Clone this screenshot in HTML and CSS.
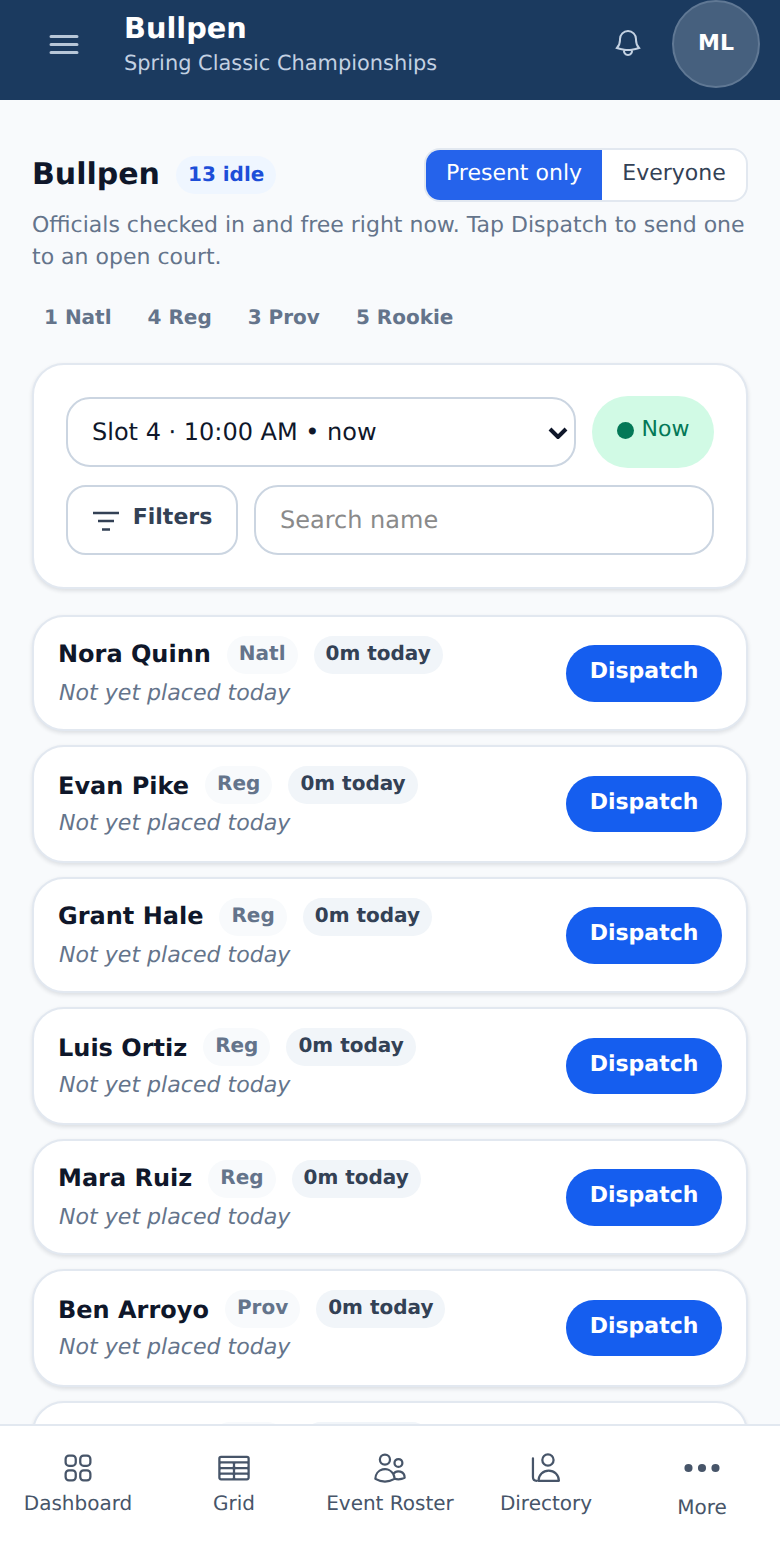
FILE: index.html
```html
<!DOCTYPE html>
<html lang="en">
<head>
<meta charset="utf-8">
<title>Bullpen</title>
<link rel="stylesheet" href="styles.css">
</head>
<body>
<div class="app">
  <header class="topbar">
    <button class="menu" aria-label="Menu"><svg viewBox="0 0 28 19" class="menu-icon"><path d="M1 1.500h26M1 9.500h26M1 17.500h26"/></svg></button>
    <div class="titles">
      <div class="app-title">Bullpen</div>
      <div class="app-sub">Spring Classic Championships</div>
    </div>
    <svg class="bell" viewBox="0 0 24 24"><path d="M14.857 17.082a23.848 23.848 0 005.454-1.31A8.967 8.967 0 0118 9.75v-.7V9A6 6 0 006 9v.75a8.967 8.967 0 01-2.312 6.022c1.733.64 3.56 1.085 5.455 1.31m5.714 0a24.255 24.255 0 01-5.714 0m5.714 0a3 3 0 11-5.714 0"/></svg>
    <div class="avatar">ML</div>
  </header>

  <main class="main">
    <div class="title-row">
      <h1 class="page-title">Bullpen</h1>
      <span class="idle">13 idle</span>
      <div class="toggle">
        <span class="toggle-on">Present only</span>
        <span class="toggle-off">Everyone</span>
      </div>
    </div>
    <p class="desc">Officials checked in and free right now. Tap Dispatch to send one to an open court.</p>
    <div class="stats">
      <span class="stat">1 Natl</span>
      <span class="stat">4 Reg</span>
      <span class="stat">3 Prov</span>
      <span class="stat">5 Rookie</span>
    </div>

    <section class="panel">
      <div class="panel-row">
        <div class="select-wrap">
          <select class="slot"><option>Slot 4 · 10:00 AM • now</option></select>
          <svg class="chev" viewBox="0 0 20 12"><path d="M2 2l8 8 8-8"/></svg>
        </div>
        <div class="now"><span class="dot"></span>Now</div>
      </div>
      <div class="panel-row">
        <button class="filters">
          <svg class="filter-icon" viewBox="0 0 26 20"><path d="M0 2h26M5 10h16M9 18.500h8"/></svg>
          Filters
        </button>
        <input class="search" placeholder="Search name">
      </div>
    </section>

    <section class="list">
      <article class="card">
        <div class="info">
          <div class="line"><span class="name">Nora Quinn</span><span class="tag">Natl</span><span class="mins">0m today</span></div>
          <div class="note">Not yet placed today</div>
        </div>
        <button class="dispatch">Dispatch</button>
      </article>
      <article class="card">
        <div class="info">
          <div class="line"><span class="name">Evan Pike</span><span class="tag">Reg</span><span class="mins">0m today</span></div>
          <div class="note">Not yet placed today</div>
        </div>
        <button class="dispatch">Dispatch</button>
      </article>
      <article class="card">
        <div class="info">
          <div class="line"><span class="name">Grant Hale</span><span class="tag">Reg</span><span class="mins">0m today</span></div>
          <div class="note">Not yet placed today</div>
        </div>
        <button class="dispatch">Dispatch</button>
      </article>
      <article class="card">
        <div class="info">
          <div class="line"><span class="name">Luis Ortiz</span><span class="tag">Reg</span><span class="mins">0m today</span></div>
          <div class="note">Not yet placed today</div>
        </div>
        <button class="dispatch">Dispatch</button>
      </article>
      <article class="card">
        <div class="info">
          <div class="line"><span class="name">Mara Ruiz</span><span class="tag">Reg</span><span class="mins">0m today</span></div>
          <div class="note">Not yet placed today</div>
        </div>
        <button class="dispatch">Dispatch</button>
      </article>
      <article class="card">
        <div class="info">
          <div class="line"><span class="name">Ben Arroyo</span><span class="tag">Prov</span><span class="mins">0m today</span></div>
          <div class="note">Not yet placed today</div>
        </div>
        <button class="dispatch">Dispatch</button>
      </article>
      <article class="card">
        <div class="info">
          <div class="line"><span class="name">Tess Lowe</span><span class="tag">Prov</span><span class="mins">0m today</span></div>
          <div class="note">Not yet placed today</div>
        </div>
        <button class="dispatch">Dispatch</button>
      </article>
    </section>
  </main>

  <nav class="nav">
    <a class="nav-item">
      <svg class="nav-icon" viewBox="0 0 24 24"><path d="M3.750 6A2.250 2.250 0 016 3.750h2.250A2.250 2.250 0 0110.500 6v2.250a2.250 2.250 0 01-2.250 2.250H6a2.250 2.250 0 01-2.250-2.250V6zM3.750 15.750A2.250 2.250 0 016 13.500h2.250a2.250 2.250 0 012.250 2.250V18a2.250 2.250 0 01-2.250 2.250H6A2.250 2.250 0 013.750 18v-2.250zM13.500 6a2.250 2.250 0 012.250-2.250H18A2.250 2.250 0 0120.250 6v2.250A2.250 2.250 0 0118 10.500h-2.250a2.250 2.250 0 01-2.250-2.250V6zM13.500 15.750a2.250 2.250 0 012.250-2.250H18a2.250 2.250 0 012.250 2.250V18A2.250 2.250 0 0118 20.250h-2.250a2.250 2.250 0 01-2.250-2.250v-2.250z"/></svg>
      <span>Dashboard</span>
    </a>
    <a class="nav-item">
      <svg class="nav-icon" viewBox="0 0 24 24"><path d="M3.375 19.5h17.25m-17.25 0a1.125 1.125 0 01-1.125-1.125M3.375 19.5h7.5c.621 0 1.125-.504 1.125-1.125m-9.75 0V5.625m0 12.75v-1.5c0-.621.504-1.125 1.125-1.125m18.375 2.625V5.625m0 12.75c0 .621-.504 1.125-1.125 1.125m1.125-1.125v-1.5c0-.621-.504-1.125-1.125-1.125m0 3.75h-7.5A1.125 1.125 0 0112 18.375m9.750-12.750c0-.621-.504-1.125-1.125-1.125H3.375c-.621 0-1.125.504-1.125 1.125m19.5 0v1.5c0 .621-.504 1.125-1.125 1.125M2.250 5.625v1.5c0 .621.504 1.125 1.125 1.125m0 0h17.25m-17.25 0h7.5c.621 0 1.125.504 1.125 1.125M3.375 8.250c-.621 0-1.125.504-1.125 1.125v1.5c0 .621.504 1.125 1.125 1.125m17.25-3.750h-7.5c-.621 0-1.125.504-1.125 1.125m8.625-1.125c.621 0 1.125.504 1.125 1.125v1.5c0 .621-.504 1.125-1.125 1.125m-17.25 0h7.5m-7.5 0c-.621 0-1.125.504-1.125 1.125v1.5c0 .621.504 1.125 1.125 1.125M12 10.875v-1.5m0 1.5c0 .621-.504 1.125-1.125 1.125M12 10.875c0 .621.504 1.125 1.125 1.125m-2.250 0c.621 0 1.125.504 1.125 1.125M13.125 12h7.5m-7.5 0c-.621 0-1.125.504-1.125 1.125M20.625 12c.621 0 1.125.504 1.125 1.125v1.5c0 .621-.504 1.125-1.125 1.125m-17.25 0h7.5M12 14.625v-1.5m0 1.5c0 .621-.504 1.125-1.125 1.125M12 14.625c0 .621.504 1.125 1.125 1.125m-2.250 0c.621 0 1.125.504 1.125 1.125m0 1.5v-1.5m0 0c0-.621.504-1.125 1.125-1.125m0 0h7.5"/></svg>
      <span>Grid</span>
    </a>
    <a class="nav-item">
      <svg class="nav-icon" viewBox="0 0 24 24"><path d="M15 19.128a9.380 9.380 0 002.625.372 9.337 9.337 0 004.121-.952 4.125 4.125 0 00-7.533-2.493M15 19.128v-.003c0-1.113-.285-2.160-.786-3.070M15 19.128v.106A12.318 12.318 0 018.624 21c-2.331 0-4.512-.645-6.374-1.766l-.001-.109a6.375 6.375 0 0111.964-3.070M12 6.375a3.375 3.375 0 11-6.750 0 3.375 3.375 0 016.750 0zm8.250 2.250a2.625 2.625 0 11-5.250 0 2.625 2.625 0 015.250 0z"/></svg>
      <span>Event Roster</span>
    </a>
    <a class="nav-item">
      <svg class="nav-icon" viewBox="0 0 24 24"><path d="M3.300 5.500V18c0 1.500.8 2.500 2.500 2.500M7 20.500a6.800 6.800 0 0113.600 0zM17.050 6.700a3.750 3.750 0 11-7.500 0 3.750 3.750 0 017.500 0z"/></svg>
      <span>Directory</span>
    </a>
    <a class="nav-item nav-more">
      <svg class="nav-icon" viewBox="0 0 24 24"><circle class="fill" cx="3" cy="12" r="2.700"/><circle class="fill" cx="12" cy="12" r="2.700"/><circle class="fill" cx="21" cy="12" r="2.700"/></svg>
      <span>More</span>
    </a>
  </nav>
</div>
</body>
</html>
```

FILE: styles.css
```css
* { box-sizing: border-box; }
html, body { margin: 0; padding: 0; }
body {
  font-family: "DejaVu Sans", sans-serif;
  background: #f8fafc;
  color: #0f172a;
  text-rendering: geometricPrecision;
}
button, input, select { font-family: inherit; margin: 0; text-rendering: inherit; }

.app {
  height: 1560px;
  display: flex;
  flex-direction: column;
  overflow: hidden;
}

/* top bar */
.topbar {
  flex: none;
  height: 100px;
  background: #1b3a5f;
  display: flex;
  align-items: flex-start;
  padding-right: 20px;
}
.menu {
  width: 124px;
  height: 88px;
  background: none;
  border: 0;
  padding: 0 0 0 49px;
  display: flex;
  align-items: center;
}
.menu-icon {
  width: 30px;
  height: 19px;
  fill: none;
  stroke: #b7c6d8;
  stroke-width: 3;
  stroke-linecap: round;
}
.titles { flex: 1; padding-top: 10px; }
.app-title { font-size: 28.800px; font-weight: 700; line-height: 36px; color: #fff; }
.app-sub { font-size: 20.900px; line-height: 32px; color: #c3d1e2; margin-top: 1px; }
.bell {
  width: 32px;
  height: 32px;
  margin: 27px 28px 0 0;
  fill: none;
  stroke: #c3d1e2;
  stroke-width: 1.500;
}
.avatar {
  width: 88px;
  height: 88px;
  border-radius: 50%;
  background: #46607e;
  border: 2px solid #607894;
  color: #fff;
  font-size: 22px;
  font-weight: 700;
  display: flex;
  align-items: center;
  justify-content: center;
  padding-bottom: 2px;
}

/* main */
.main {
  flex: 1;
  min-height: 0;
  overflow: hidden;
  padding: 48px 32px 0;
}
.title-row { display: flex; align-items: center; height: 54px; }
.page-title { margin: 0; font-size: 30px; font-weight: 700; line-height: 1; color: #0f172a; }
.idle {
  margin-left: 16px;
  height: 38px;
  padding: 0 12px;
  border-radius: 19px;
  background: #eff6ff;
  color: #1d4ed8;
  font-size: 20px;
  font-weight: 700;
  line-height: 36px;
}
.toggle {
  margin-left: auto;
  height: 54px;
  display: flex;
  border: 2px solid #e2e8f0;
  border-radius: 16px;
  background: #fff;
  overflow: hidden;
  font-size: 22px;
  line-height: 47px;
}
.toggle-on { width: 176px; text-align: center; background: #2563eb; color: #fff; }
.toggle-off { width: 144px; text-align: center; color: #334155; }
.desc {
  margin: 8px 0 0;
  font-size: 22px;
  line-height: 32px;
  color: #64748b;
}
.stats { display: flex; gap: 12px; margin-top: 22px; height: 42px; }
.stat {
  padding: 0 12px;
  font-size: 20px;
  font-weight: 700;
  line-height: 42px;
  color: #64748b;
}

/* panel */
.panel {
  margin-top: 25px;
  padding: 32px;
  background: #fff;
  border: 2px solid #e2e8f0;
  border-radius: 32px;
  box-shadow: 0 2px 4px rgba(15, 23, 42, .12);
  display: flex;
  flex-direction: column;
  gap: 18px;
}
.panel-row { display: flex; gap: 16px; }
.select-wrap { position: relative; flex: 1; }
.slot {
  display: block;
  width: 100%;
  height: 70px;
  appearance: none;
  background: #fff;
  border: 2px solid #cbd5e1;
  border-radius: 24px;
  padding: 0 24px;
  font-size: 24px;
  color: #0f172a;
}
.chev {
  position: absolute;
  right: 8px;
  top: 30px;
  width: 20px;
  height: 12px;
  fill: none;
  stroke: #0f172a;
  stroke-width: 4;
}
.now {
  width: 122px;
  height: 72px;
  margin: -1px 0;
  border-radius: 36px;
  background: #d1fae5;
  color: #047857;
  font-size: 22px;
  display: flex;
  align-items: center;
  justify-content: center;
  gap: 8px;
  padding-bottom: 6px;
}
.dot { width: 17px; height: 17px; border-radius: 50%; background: #047857; margin-top: 3px; }
.filters {
  width: 172px;
  height: 70px;
  background: #fff;
  border: 2px solid #cbd5e1;
  border-radius: 20px;
  display: flex;
  align-items: center;
  justify-content: center;
  gap: 14px;
  font-size: 22px;
  font-weight: 700;
  color: #334155;
  padding: 0 0 6px;
}
.filter-icon {
  width: 26px;
  height: 20px;
  margin: 7px 0 0 1px;
  fill: none;
  stroke: #334155;
  stroke-width: 2.500;
}
.search {
  flex: 1;
  min-width: 0;
  height: 70px;
  background: #fff;
  border: 2px solid #cbd5e1;
  border-radius: 24px;
  padding: 0 24px;
  font-size: 24px;
  color: #0f172a;
}
.search::placeholder { color: #8a8a8a; opacity: 1; }

/* list */
.list { margin-top: 26px; display: flex; flex-direction: column; gap: 14px; }
.card {
  flex: none;
  height: 116px;
  padding: 19px 24px;
  background: #fff;
  border: 2px solid #e2e8f0;
  border-radius: 32px;
  box-shadow: 0 2px 4px rgba(15, 23, 42, .12);
  display: flex;
  align-items: center;
  justify-content: space-between;
}
.card:nth-child(even) { height: 118px; }
.info { display: flex; flex-direction: column; align-self: flex-start; }
.line { display: flex; align-items: center; gap: 16px; height: 38px; }
.name { font-size: 24px; font-weight: 700; color: #0f172a; line-height: 38px; padding-bottom: 2px; }
.card:nth-child(even) .name { padding: 2px 0 0; }
.tag, .mins {
  height: 38px;
  padding: 0 12px;
  border-radius: 19px;
  font-size: 20px;
  font-weight: 700;
  line-height: 34px;
}
.tag { background: #f8fafc; color: #64748b; }
.mins { background: #f1f5f9; color: #334155; }
.note { margin: 3px 0 0 1px; font-size: 22.100px; line-height: 32px; font-style: italic; color: #64748b; }
.dispatch {
  width: 156px;
  height: 57px;
  border: 0;
  border-radius: 29px;
  background: #155eef;
  color: #fff;
  font-size: 22px;
  font-weight: 700;
  padding: 0 0 4px;
}
.card:nth-child(even) .dispatch { height: 56px; border-radius: 28px; }

/* bottom nav */
.nav {
  flex: none;
  height: 136px;
  background: #fff;
  border-top: 2px solid #e2e8f0;
  display: flex;
  position: relative;
}
.nav-item {
  flex: 1;
  display: flex;
  flex-direction: column;
  align-items: center;
  padding-top: 23px;
  font-size: 20px;
  line-height: 28px;
  color: #475569;
}
.nav-icon {
  width: 36px;
  height: 36px;
  margin-top: 1px;
  fill: none;
  stroke: #475569;
  stroke-width: 1.500;
  stroke-linecap: round;
  stroke-linejoin: round;
}
.nav-icon .fill { fill: #475569; stroke: none; }
.nav-item span { margin-top: 3px; }
.nav-more span { margin-top: 7px; }
```
